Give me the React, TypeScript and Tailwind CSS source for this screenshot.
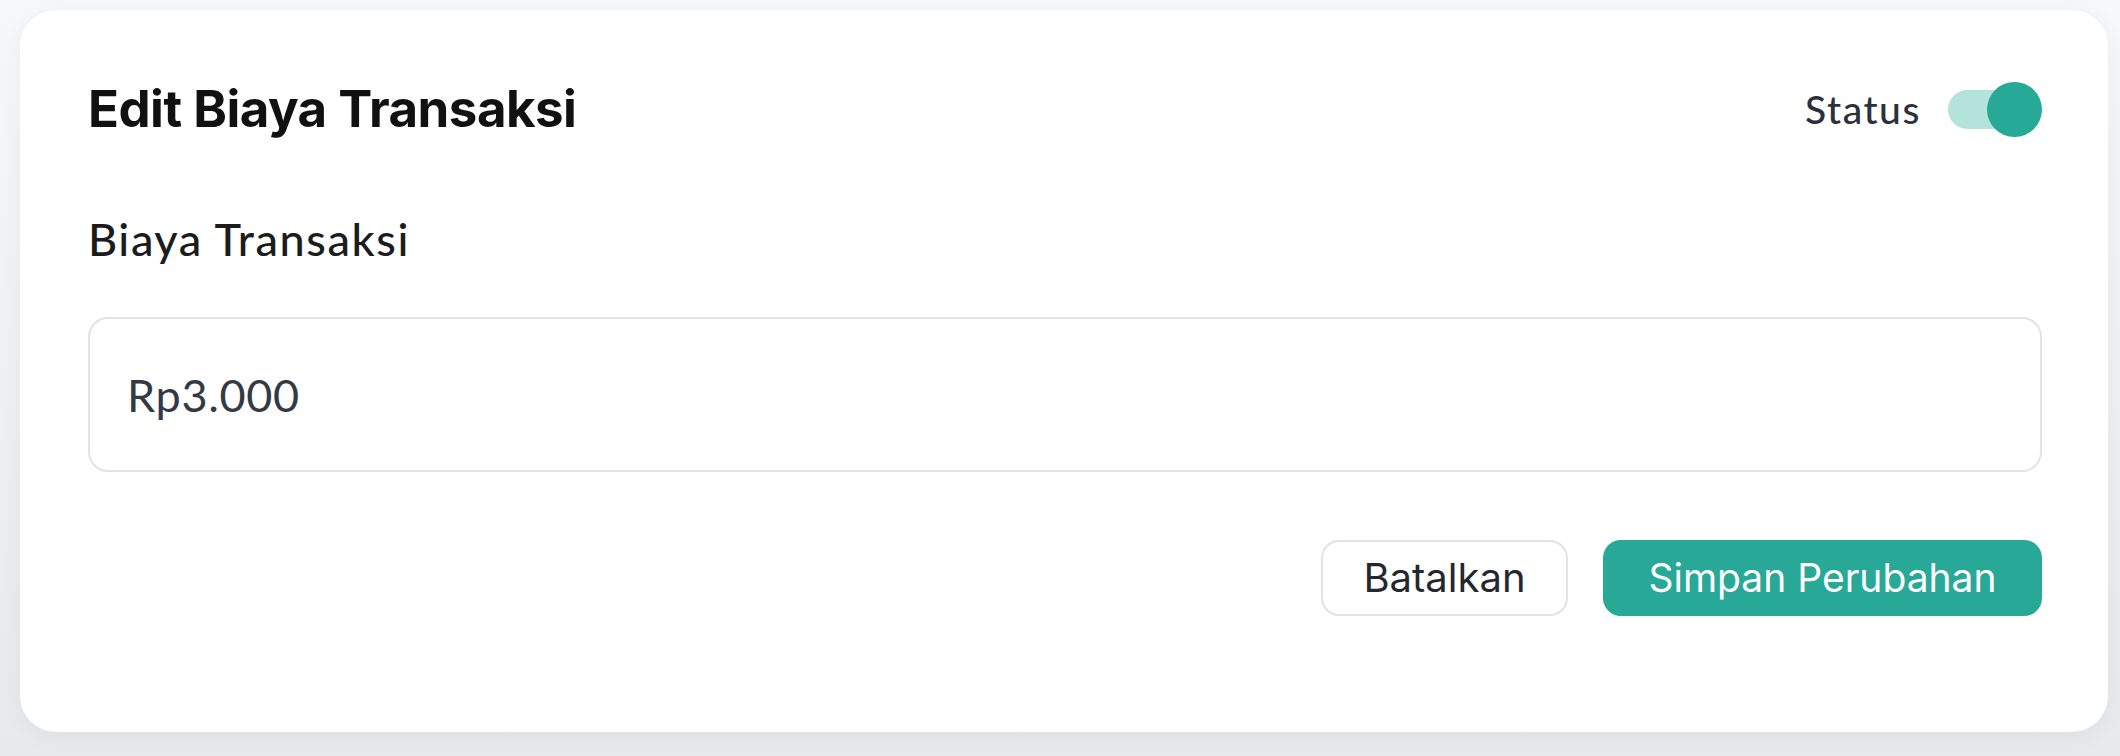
import { useState } from "react";

export default function App() {
   const [active, setActive] = useState(true);
   const [fee, setFee] = useState("Rp3.000");

   return (
      <div className="min-h-screen w-full bg-gradient-to-b from-[#f7f8f9] to-[#e7e9ec] pt-[10px] pl-[20px] pr-[12px] pb-[24px]">
         <div className="h-[722px] rounded-[36px] bg-white pl-[68px] pr-[66px] pt-[69px] shadow-[0_4px_24px_rgba(0,0,0,0.05)]">
            <div className="flex items-center justify-between">
               <h1 className="font-['Inter',sans-serif] text-[51px] font-bold leading-[60px] tracking-[-0.01em] text-[#111111]">
                  Edit Biaya Transaksi
               </h1>
               <div className="flex items-center gap-[27px]">
                  <span className="font-['Lato',sans-serif] text-[39px] font-medium tracking-[0.04em] text-[#2b303a]">Status</span>
                  <button
                     type="button"
                     onClick={() => setActive(!active)}
                     className="relative flex h-[55px] w-[94px] items-center"
                  >
                     <span className={`h-[39px] w-[85px] rounded-full ${active ? "bg-[#b4e3db]" : "bg-gray-200"}`} />
                     <span
                        className={`absolute top-0 h-[55px] w-[55px] rounded-full ${active ? "right-0 bg-[#27a997]" : "left-0 bg-gray-400"}`}
                     />
                  </button>
               </div>
            </div>

            <label className="mt-[74px] block font-['Lato',sans-serif] text-[45px] font-medium leading-[52px] tracking-[0.035em] text-[#1c1c1c]">
               Biaya Transaksi
            </label>

            <input
               type="text"
               value={fee}
               onChange={(e) => setFee(e.target.value)}
               className="mt-[52px] h-[155px] w-full rounded-[20px] border-2 border-[#e3e3e3] pl-[37px] font-['Lato',sans-serif] text-[45px] tracking-[0.015em] text-[#333a45] focus:outline-none"
            />

            <div className="mt-[68px] flex justify-end gap-[35px]">
               <button
                  type="button"
                  className="h-[76px] w-[247px] rounded-[18px] border-2 border-[#e3e3e3] bg-white font-['Inter',sans-serif] text-[40px] text-[#23272e]"
               >
                  Batalkan
               </button>
               <button
                  type="button"
                  className="h-[76px] w-[439px] rounded-[18px] bg-[#28a998] font-['Inter',sans-serif] text-[39px] text-white"
               >
                  Simpan Perubahan
               </button>
            </div>
         </div>
      </div>
   );
}
